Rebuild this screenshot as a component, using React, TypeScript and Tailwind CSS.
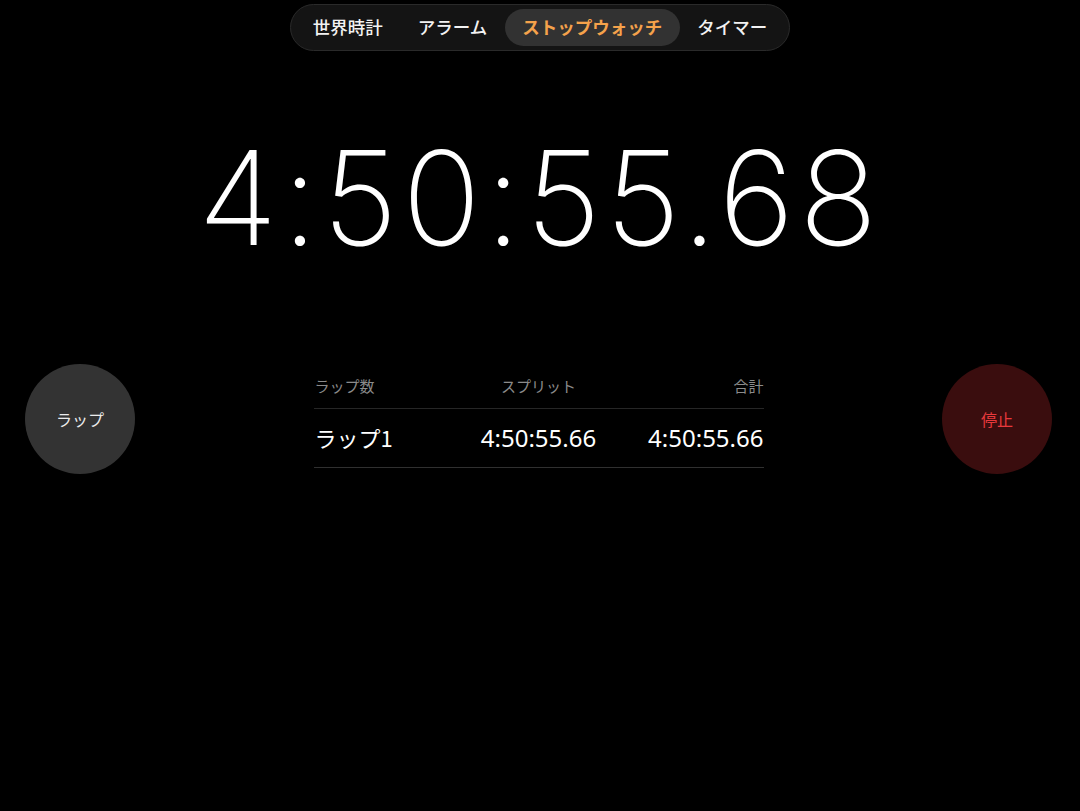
import React from 'react';

const tabs = ['世界時計', 'アラーム', 'ストップウォッチ', 'タイマー'];

const laps = [{ name: 'ラップ1', split: '4:50:55.66', total: '4:50:55.66' }];

export default function App() {
  const active = 'ストップウォッチ';

  return (
    <div
      className="w-full h-[811px] bg-black text-white flex flex-col items-center overflow-hidden"
      style={{ fontFamily: '"Noto Sans CJK JP", "Noto Sans", sans-serif' }}
    >
      {/* Tabs */}
      <div className="mt-[4px] h-[47px] flex items-center px-[4px] rounded-full bg-[#141414] border border-[#2a2a2a]">
        {tabs.map((tab) => (
          <div
            key={tab}
            className={
              tab === active
                ? 'h-[37px] px-[17.5px] flex items-center rounded-full bg-[#323232] text-[#f5a24b] text-[17.5px] font-bold'
                : 'h-[37px] px-[17.5px] flex items-center rounded-full text-[#f2f2f2] text-[17.5px] font-medium'
            }
          >
            {tab}
          </div>
        ))}
      </div>

      {/* Elapsed time */}
      <div
        className="mt-[82px] h-[130px] text-[130px] leading-none font-extralight tracking-[4.5px]"
        style={{ fontFamily: 'Inter, Roboto, "Liberation Sans", sans-serif' }}
      >
        4:50:55.68
      </div>

      {/* Buttons and laps */}
      <div className="mt-[101px] w-full flex items-center justify-between pl-[25px] pr-[28px]">
        <button className="w-[110px] h-[110px] rounded-full bg-[#333333] text-[#ececec] text-[16px]">
          ラップ
        </button>

        <div className="w-[450px]">
          <div className="grid grid-cols-3 pt-[5px] pb-[12px] leading-[20px] text-[15px] text-[#8b8b8b] border-b border-[#262626]">
            <div className="pl-[1px]">ラップ数</div>
            <div className="text-center">スプリット</div>
            <div className="text-right">合計</div>
          </div>
          {laps.map((lap) => (
            <div
              key={lap.name}
              className="grid grid-cols-3 items-center h-[59px] text-white border-b border-[#303030]"
            >
              <div className="pl-[1px] text-[22px]">{lap.name}</div>
              <div
                className="text-center text-[24px]"
                style={{ fontFamily: '"Noto Sans", sans-serif' }}
              >
                {lap.split}
              </div>
              <div
                className="text-right text-[24px]"
                style={{ fontFamily: '"Noto Sans", sans-serif' }}
              >
                {lap.total}
              </div>
            </div>
          ))}
        </div>

        <button className="w-[110px] h-[110px] rounded-full bg-[#3a0d0e] text-[#e8393c] text-[16px]">
          停止
        </button>
      </div>
    </div>
  );
}
